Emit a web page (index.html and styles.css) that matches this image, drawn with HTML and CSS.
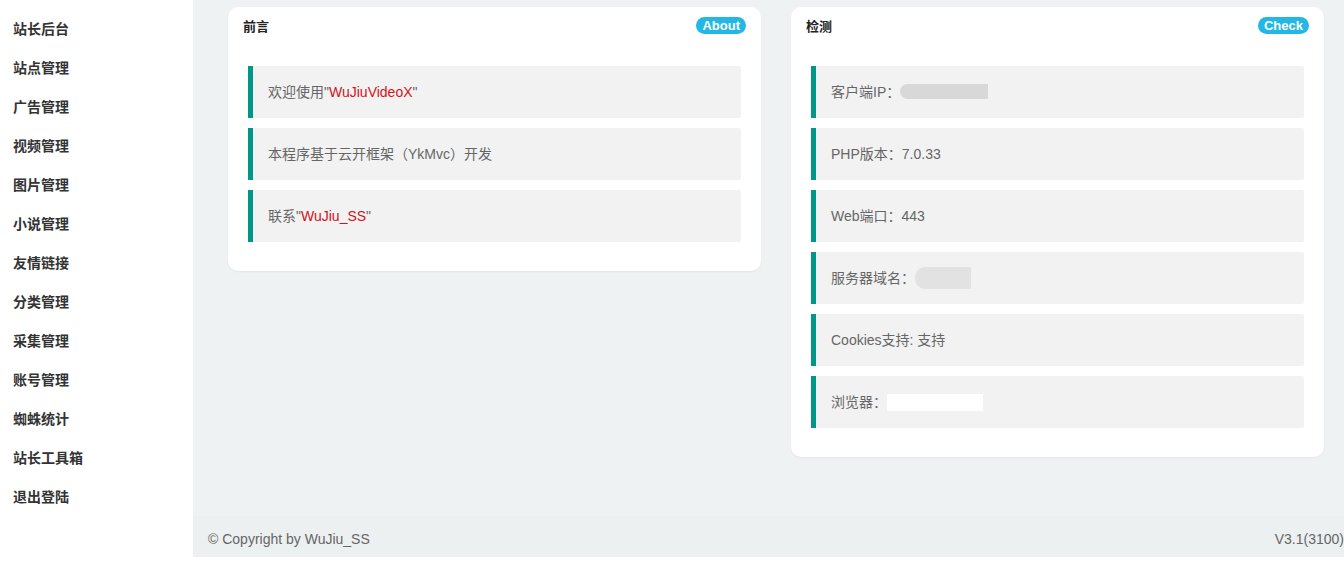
FILE: index.html
```html
<!DOCTYPE html>
<html lang="zh-CN">
<head>
  <meta charset="UTF-8" />
  <meta name="viewport" content="width=device-width, initial-scale=1.0" />
  <title>站长后台</title>
  <link rel="stylesheet" href="styles.css">
</head>
<body>
  <div class="layout">
    <aside class="side">
      <ul class="nav">
        <li><a href="#">站长后台</a></li>
        <li><a href="#">站点管理</a></li>
        <li><a href="#">广告管理</a></li>
        <li><a href="#">视频管理</a></li>
        <li><a href="#">图片管理</a></li>
        <li><a href="#">小说管理</a></li>
        <li><a href="#">友情链接</a></li>
        <li><a href="#">分类管理</a></li>
        <li><a href="#">采集管理</a></li>
        <li><a href="#">账号管理</a></li>
        <li><a href="#">蜘蛛统计</a></li>
        <li><a href="#">站长工具箱</a></li>
        <li><a href="#">退出登陆</a></li>
      </ul>
    </aside>

    <div class="main">
      <div class="body">
        <div class="card">
          <div class="card-header">
            <span class="title">前言</span>
            <span class="badge">About</span>
          </div>
          <div class="card-body">
            <blockquote class="quote">欢迎使用"<span class="red">WuJiuVideoX</span>"</blockquote>
            <blockquote class="quote">本程序基于云开框架（YkMvc）开发</blockquote>
            <blockquote class="quote">联系"<span class="red">WuJiu_SS</span>"</blockquote>
          </div>
        </div>

        <div class="card">
          <div class="card-header">
            <span class="title">检测</span>
            <span class="badge">Check</span>
          </div>
          <div class="card-body">
            <blockquote class="quote">客户端IP：<span class="mask mask-ip"></span></blockquote>
            <blockquote class="quote">PHP版本：7.0.33</blockquote>
            <blockquote class="quote">Web端口：443</blockquote>
            <blockquote class="quote">服务器域名：<span class="mask mask-host"></span></blockquote>
            <blockquote class="quote">Cookies支持: 支持</blockquote>
            <blockquote class="quote">浏览器：<span class="mask mask-ua"></span></blockquote>
          </div>
        </div>
      </div>

      <footer class="footer">
        <span>© Copyright by WuJiu_SS</span>
        <span>V3.1(3100)</span>
      </footer>
    </div>
  </div>
</body>
</html>
```

FILE: styles.css
```css
:root {
  --teal: #009688;
  --cyan: #23b7e5;
  --main-bg: #eff2f3;
  --quote-bg: #f2f2f2;
  --text-dark: #333;
  --text-light: #666;
}

html, body {
  margin: 0;
  padding: 0;
  height: 100%;
  background: #fff;
}

body {
  font-family: "Liberation Sans", Arial, "Noto Sans CJK SC", sans-serif;
  font-size: 14px;
  color: var(--text-dark);
}

.layout {
  display: flex;
  height: 557px;
}

.side {
  width: 193px;
  flex-shrink: 0;
  background: #fff;
}

.nav {
  list-style: none;
  margin: 0;
  padding: 10px 0 0;
}

.nav li a {
  display: block;
  height: 39px;
  line-height: 39px;
  padding-left: 13px;
  font-weight: bold;
  color: var(--text-dark);
  text-decoration: none;
}

.main {
  flex: 1;
  display: flex;
  flex-direction: column;
  background: var(--main-bg);
}

.body {
  flex: 1;
  display: grid;
  grid-template-columns: 1fr 1fr;
  column-gap: 30px;
  align-items: start;
  padding: 7px 20px 0 35px;
}

.card {
  background: #fff;
  border-radius: 10px;
  box-shadow: 0 1px 2px rgba(0,0,0,0.05);
}

.card-header {
  display: flex;
  justify-content: space-between;
  align-items: flex-start;
  height: 42px;
  padding: 0 15px;
}

.title {
  line-height: 40px;
  font-weight: bold;
  font-size: 13px;
  color: #222;
}

.badge {
  margin-top: 10px;
  background: var(--cyan);
  color: #fff;
  font-size: 13px;
  font-weight: bold;
  line-height: 17px;
  height: 17px;
  padding: 0 6px;
  border-radius: 9px;
}

.card-body {
  padding: 17px 20px 19px;
}

.quote {
  margin: 0 0 10px;
  padding: 15px;
  line-height: 22px;
  border-left: 5px solid var(--teal);
  border-radius: 0 2px 2px 0;
  background: var(--quote-bg);
  color: var(--text-light);
}

.red {
  color: #d3121b;
}

.mask {
  display: inline-block;
  height: 15px;
  vertical-align: -2px;
}

.mask-ip {
  width: 88px;
  background: #d8d8d8;
  border-radius: 8px 0 0 8px;
}

.mask-host {
  width: 56px;
  height: 22px;
  vertical-align: -6px;
  background: #e2e2e2;
  border-radius: 10px 0 0 10px;
}

.mask-ua {
  width: 96px;
  height: 17px;
  vertical-align: -4px;
  background: #fff;
}

.footer {
  display: flex;
  justify-content: space-between;
  align-items: center;
  height: 37px;
  padding: 4px 0 0 15px;
  background: #ecf0f1;
  color: var(--text-light);
  font-size: 14px;
}
```
